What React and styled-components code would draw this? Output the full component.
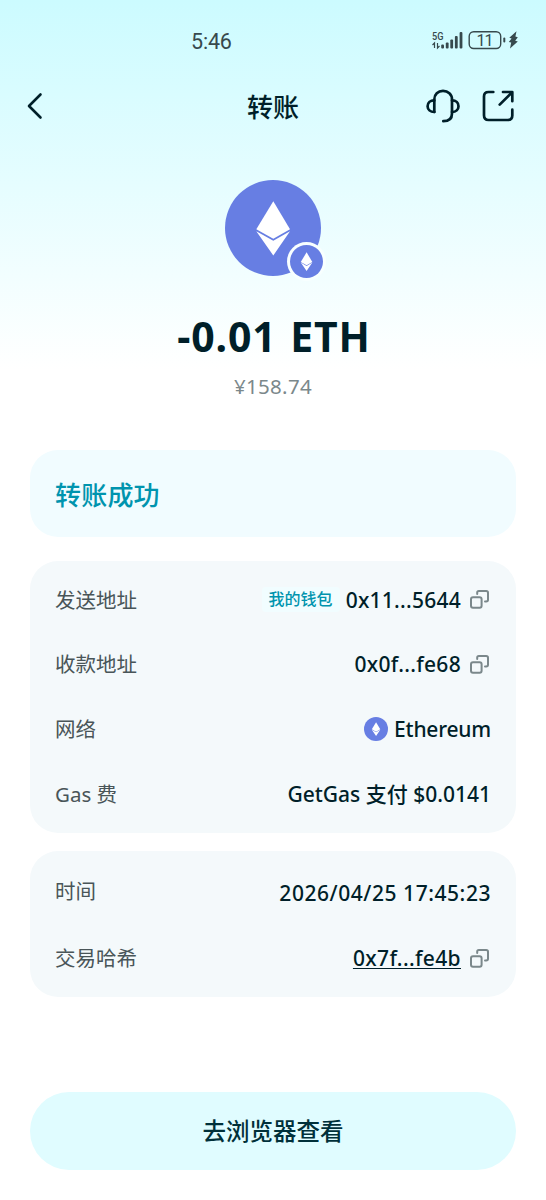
import React from 'react';
import styled, { createGlobalStyle } from 'styled-components';

const GlobalStyle = createGlobalStyle`
  * {
    box-sizing: border-box;
  }

  body {
    margin: 0;
    background: #ffffff;
    color: #001f29;
    font-family: 'Noto Sans', 'Noto Sans CJK SC', sans-serif;
  }
`;

const Page = styled.main`
  display: flex;
  flex-direction: column;
  width: 546px;
  height: 1200px;
  padding: 0 30px;
  overflow: hidden;
  background: linear-gradient(180deg, #ccfbff 0, #ffffff 370px);
`;

const StatusBar = styled.div`
  display: flex;
  align-items: center;
  justify-content: space-between;
  height: 80px;
  margin: 0 -3px 0 161px;
  color: #37494d;
  font-family: Roboto, sans-serif;
`;

const Clock = styled.span`
  padding-top: 3px;
  font-size: 21.5px;
  line-height: 24px;
  letter-spacing: -0.2px;
`;

const StatusIcons = styled.svg`
  display: block;
  width: 88px;
  height: 24px;
`;

const Header = styled.header`
  display: grid;
  grid-template-columns: 1fr auto 1fr;
  align-items: center;
  height: 52px;
  margin: 0 -5px;
`;

const Title = styled.h1`
  margin: 0;
  padding-top: 2px;
  font-size: 26px;
  font-weight: 500;
  line-height: 32px;
`;

const IconButton = styled.button`
  display: flex;
  padding: 0;
  border: 0;
  background: none;
  color: #001f29;
`;

const Actions = styled.div`
  display: flex;
  justify-content: flex-end;
  gap: 21px;
  padding-right: 6px;
`;

const Summary = styled.section`
  display: flex;
  flex-direction: column;
  align-items: center;
  height: 318px;
  padding-top: 48px;
`;

const TokenLogo = styled.div`
  position: relative;
  display: flex;
  width: 96px;
  height: 96px;
`;

const NetworkBadge = styled.div`
  position: absolute;
  right: -5px;
  bottom: -5px;
  display: flex;
  padding: 3px;
  border-radius: 50%;
  background: #f8ffff;
`;

const Amount = styled.div`
  margin-top: 36px;
  padding-left: 2px;
  font-size: 41px;
  font-weight: 700;
  line-height: 48px;
  letter-spacing: 0.9px;
  word-spacing: 2px;
`;

const FiatValue = styled.div`
  margin-top: 12px;
  color: #7b888b;
  font-size: 20.5px;
  line-height: 28px;
  letter-spacing: 0.3px;
`;

const StatusCard = styled.section`
  display: flex;
  align-items: center;
  height: 87px;
  padding: 0 25px 0;
  border-radius: 28px;
  background: #f1fcff;
  color: #0094ae;
  font-size: 26px;
  font-weight: 500;
  letter-spacing: 0.2px;
`;

const DetailCard = styled.section`
  display: flex;
  flex-direction: column;
  margin-top: ${({ $gap }) => $gap}px;
  padding: 6px 25px;
  border-radius: 28px;
  background: #f4f9fb;
`;

const Row = styled.div`
  display: flex;
  align-items: center;
  justify-content: space-between;
  height: ${({ $height }) => $height || 65}px;
`;

const Label = styled.span`
  color: #495558;
  font-size: 20.5px;
  line-height: 30px;
`;

const Value = styled.div`
  display: flex;
  align-items: center;
  padding-top: ${({ $drop }) => $drop || 0}px;
  font-size: 21px;
  font-weight: 550;
  line-height: 30px;
  letter-spacing: ${({ $tracking }) => $tracking || 0}px;
  white-space: nowrap;
`;

const WalletTag = styled.span`
  margin-right: 6px;
  padding: 0 7px;
  border-radius: 4px;
  background: #f1fdff;
  color: #0094ae;
  font-size: 16px;
  font-weight: 500;
  line-height: 25px;
  letter-spacing: 0;
`;

const HashLink = styled.a`
  color: inherit;
  text-decoration: underline;
  text-decoration-thickness: 1px;
  text-underline-offset: 2px;
`;

const CopyButton = styled(IconButton)`
  margin: 0 2px 0 9px;
  color: #7b888b;
`;

const NetworkIcon = styled.span`
  display: flex;
  margin-right: 6px;
`;

const ExplorerButton = styled.button`
  height: 78px;
  margin-top: 95px;
  padding-bottom: 3px;
  border: 0;
  border-radius: 39px;
  background: #e0fcff;
  color: #00303a;
  font-family: inherit;
  font-size: 23.5px;
  font-weight: 500;
`;

const EthIcon = ({ size }) => (
  <svg width={size} height={size} viewBox="0 0 96 96">
    <circle cx="48" cy="48" r="48" fill="#677ee3" />
    <path d="M48.3 21.3 65 49.3 48.3 58.7 31.3 49.3Z" fill="#fff" />
    <path d="M31.3 51.2 48.3 60.8 65 51.2 48.3 75.5Z" fill="#fff" />
  </svg>
);

const CopyIcon = () => (
  <svg
    width="19"
    height="19"
    viewBox="0 0 19 19"
    fill="none"
    stroke="currentColor"
    strokeWidth="2"
    strokeLinecap="round"
    strokeLinejoin="round"
  >
    <rect x="1" y="7.2" width="10.6" height="10.6" rx="2" />
    <path d="M7.2 4V2.6C7.2 1.7 7.9 1 8.8 1H16.2C17.2 1 18 1.8 18 2.8V9.8C18 10.8 17.2 11.5 16.2 11.5H15" />
  </svg>
);

const Copy = () => (
  <CopyButton aria-label="复制">
    <CopyIcon />
  </CopyButton>
);

const BackIcon = () => (
  <svg
    width="20"
    height="28"
    viewBox="0 0 20 28"
    fill="none"
    stroke="currentColor"
    strokeWidth="2.6"
    strokeLinecap="round"
    strokeLinejoin="round"
  >
    <path d="M15.5 2.5 4 14 15.5 25.5" />
  </svg>
);

const SupportIcon = () => (
  <svg
    width="34"
    height="34"
    viewBox="0 0 34 34"
    fill="none"
    stroke="currentColor"
    strokeWidth="2.7"
    strokeLinecap="round"
    strokeLinejoin="round"
  >
    <path d="M8.3 23V10.4C8.3 5.2 12 1.9 17 1.9S26 5.2 26 10.4V24.4C26 29.4 22.7 32.2 17.3 32.2" />
    <path d="M8.3 11.4C4.2 11.4 1.6 14 1.6 17.2S4.2 23 8.3 23M26 11.4C30 11.4 32.5 14 32.5 17.2S30 23 26 23" />
  </svg>
);

const ShareIcon = () => (
  <svg
    width="34"
    height="34"
    viewBox="0 0 34 34"
    fill="none"
    stroke="currentColor"
    strokeWidth="2.7"
    strokeLinecap="round"
    strokeLinejoin="round"
  >
    <path d="M12.3 3H7.5C4.5 3 3 4.8 3 7.5V26.3C3 29.3 4.8 31 7.5 31H26.7C29.7 31 31.3 29.3 31.3 26.5V20.7" />
    <path d="M22 3H31.3V12.2M31 3.4 18.7 15.6" />
  </svg>
);

const StatusBarIcons = () => (
  <StatusIcons viewBox="0 0 88 24" fill="currentColor">
    <text x="1" y="12" fontSize="10.5" fontWeight="500" textLength="11.5" lengthAdjust="spacingAndGlyphs">
      5G
    </text>
    <path d="M3.5 20V15L1.5 17M6.5 15V20L8.5 18" stroke="currentColor" strokeWidth="1.2" fill="none" />
    <rect x="10.2" y="16.5" width="2.8" height="4" rx="1" />
    <rect x="14.8" y="14.5" width="2.8" height="6" rx="1" />
    <rect x="19.3" y="11.5" width="2.8" height="9" rx="1" />
    <rect x="23.9" y="8" width="2.8" height="12.5" rx="1" />
    <rect x="28.6" y="4" width="2.8" height="16.5" rx="1" />
    <rect x="38.2" y="3.7" width="31.5" height="16.8" rx="4.5" fill="none" stroke="currentColor" strokeWidth="1.4" />
    <text x="45.5" y="18" fontSize="16" textLength="17">
      11
    </text>
    <rect x="72.3" y="9.5" width="2" height="5" rx="1" />
    <path d="M85.5 3.2 78.3 9.8 80.6 10.6 77.8 13.9 80.2 14.6 79 20.5 86.8 13.4 84.2 12.7 86.8 9.3 84.4 8.6Z" />
  </StatusIcons>
);

const App = () => (
  <>
    <GlobalStyle />
    <Page>
      <StatusBar>
        <Clock>5:46</Clock>
        <StatusBarIcons />
      </StatusBar>
      <Header>
        <IconButton aria-label="返回">
          <BackIcon />
        </IconButton>
        <Title>转账</Title>
        <Actions>
          <IconButton aria-label="客服">
            <SupportIcon />
          </IconButton>
          <IconButton aria-label="分享">
            <ShareIcon />
          </IconButton>
        </Actions>
      </Header>
      <Summary>
        <TokenLogo>
          <EthIcon size={96} />
          <NetworkBadge>
            <EthIcon size={33} />
          </NetworkBadge>
        </TokenLogo>
        <Amount>-0.01 ETH</Amount>
        <FiatValue>¥158.74</FiatValue>
      </Summary>
      <StatusCard>转账成功</StatusCard>
      <DetailCard $gap={24}>
        <Row>
          <Label>发送地址</Label>
          <Value $tracking={0.25}>
            <WalletTag>我的钱包</WalletTag>
            0x11...5644
            <Copy />
          </Value>
        </Row>
        <Row $height={64}>
          <Label>收款地址</Label>
          <Value $tracking={0.3}>
            0x0f...fe68
            <Copy />
          </Value>
        </Row>
        <Row>
          <Label>网络</Label>
          <Value $tracking={-0.2}>
            <NetworkIcon>
              <EthIcon size={24} />
            </NetworkIcon>
            Ethereum
          </Value>
        </Row>
        <Row $height={66}>
          <Label>Gas 费</Label>
          <Value>GetGas 支付 $0.0141</Value>
        </Row>
      </DetailCard>
      <DetailCard $gap={18}>
        <Row $height={68}>
          <Label>时间</Label>
          <Value $tracking={0.55} $drop={3}>
            2026/04/25 17:45:23
          </Value>
        </Row>
        <Row $height={66}>
          <Label>交易哈希</Label>
          <Value $tracking={0.35}>
            <HashLink>0x7f...fe4b</HashLink>
            <Copy />
          </Value>
        </Row>
      </DetailCard>
      <ExplorerButton>去浏览器查看</ExplorerButton>
    </Page>
  </>
);

export default App;
